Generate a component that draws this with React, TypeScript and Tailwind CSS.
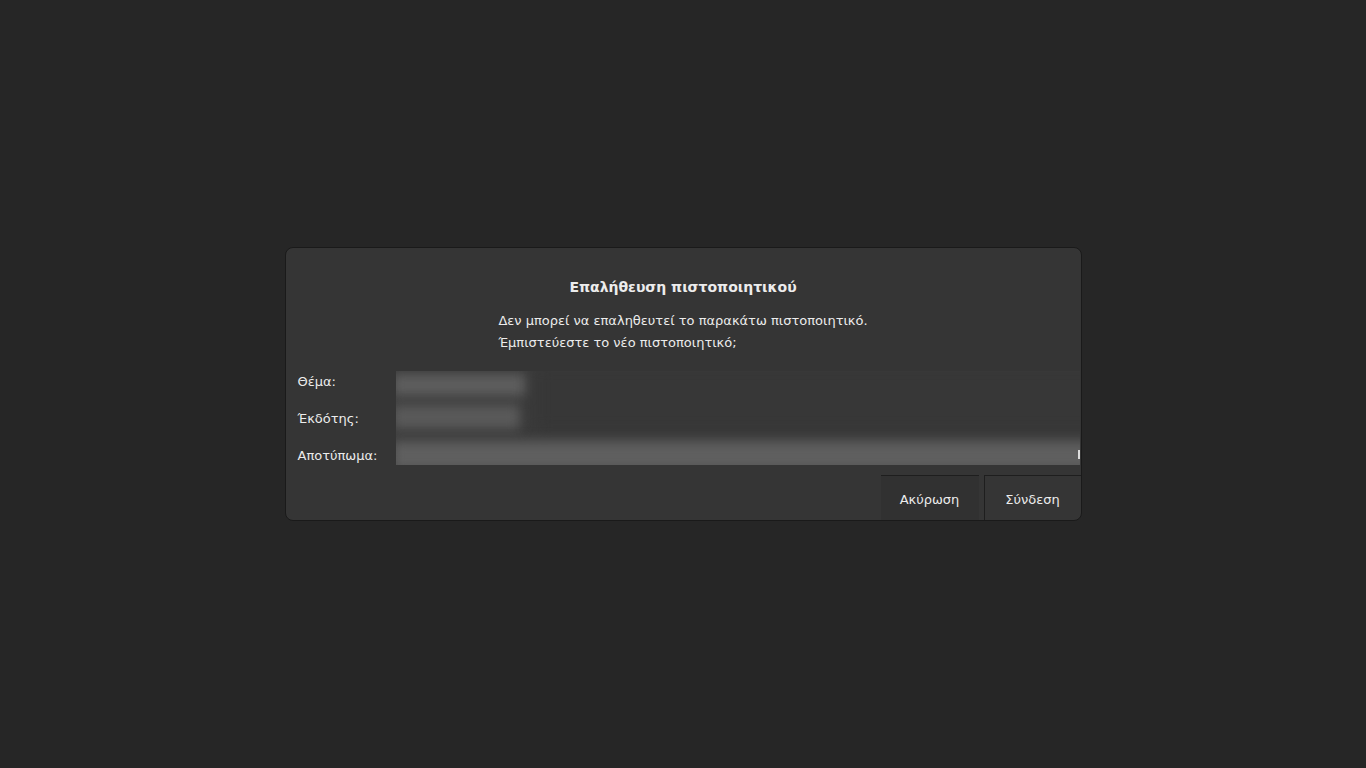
import React from "react";

export default function App() {
  const font = { fontFamily: '"DejaVu Sans", "Noto Sans", sans-serif' };
  return (
    <div className="w-[1366px] h-[768px] bg-[#262626] flex items-center justify-center" style={font}>
      <div className="w-[797px] h-[274px] bg-[#353535] border border-[#1a1a1a] rounded-[8px] flex flex-col text-[#ececec] overflow-hidden">
        <div className="pt-[29px] text-center text-[14px] font-bold leading-[20px]">
          Επαλήθευση πιστοποιητικού
        </div>
        <div className="flex justify-center mt-[13px]">
          <div className="text-[13px] leading-[22px]">
            <div>Δεν μπορεί να επαληθευτεί το παρακάτω πιστοποιητικό.</div>
            <div>Έμπιστεύεστε το νέο πιστοποιητικό;</div>
          </div>
        </div>
        <div className="flex mt-[9px] pl-[12px]">
          <div className="w-[98px] flex flex-col text-[13px]">
            <div className="h-[37px] flex items-center">Θέμα:</div>
            <div className="h-[37px] flex items-center">Έκδότης:</div>
            <div className="h-[37px] flex items-center">Αποτύπωμα:</div>
          </div>
          <div className="pt-[8px]">
            <div className="relative w-[684px] h-[94px] overflow-hidden bg-[#3b3b3b]">
              <div className="absolute left-[-4px] top-[3px] w-[134px] h-[22px] bg-[#5e5e5e] blur-[6px]" />
              <div className="absolute left-[-4px] top-[34px] w-[128px] h-[24px] bg-[#5a5a5a] blur-[6px]" />
              <div className="absolute left-[138px] top-[-8px] w-[570px] h-[70px] bg-[#373737] blur-[8px]" />
              <div className="absolute left-[-4px] top-[70px] w-[700px] h-[30px] bg-[#5f5f5f] blur-[6px]" />
              <div className="absolute right-[0px] top-[79px] w-[2px] h-[9px] bg-[#dddddd]" />
            </div>
          </div>
        </div>
        <div className="flex-1" />
        <div className="flex justify-end h-[45px]">
          <div className="w-[98px] h-full bg-[#313131] border-t border-[#1e1e1e] flex items-center justify-center pt-[4px] text-[13px]">
            Ακύρωση
          </div>
          <div className="w-[5px]" />
          <div className="w-[97px] h-full border-t border-l border-[#1e1e1e] flex items-center justify-center pt-[4px] text-[13px]">
            Σύνδεση
          </div>
        </div>
      </div>
    </div>
  );
}
